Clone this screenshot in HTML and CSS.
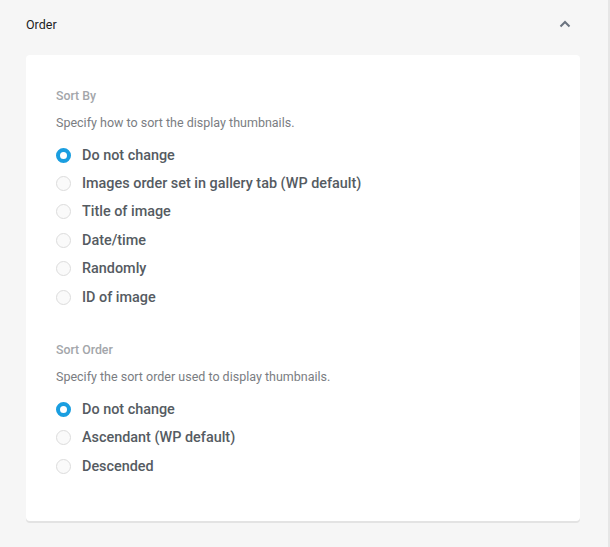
FILE: index.html
```html
<!DOCTYPE html>
<html lang="en">
<head>
<meta charset="utf-8">
<title>Order</title>
<link rel="stylesheet" href="styles.css">
</head>
<body>
<div class="page">
  <div class="panel-header">
    <span class="panel-title">Order</span>
    <svg class="chevron" width="12" height="8" viewBox="0 0 12 8"><path d="M1.5 6.5 L6 2 L10.5 6.5" fill="none" stroke="#6b7480" stroke-width="2"/></svg>
  </div>
  <div class="card">
    <div class="field">
      <div class="field-label">Sort By</div>
      <div class="field-desc">Specify how to sort the display thumbnails.</div>
      <div class="options">
        <div class="option"><span class="radio checked"></span><span class="option-text">Do not change</span></div>
        <div class="option"><span class="radio"></span><span class="option-text">Images order set in gallery tab (WP default)</span></div>
        <div class="option"><span class="radio"></span><span class="option-text">Title of image</span></div>
        <div class="option"><span class="radio"></span><span class="option-text">Date/time</span></div>
        <div class="option"><span class="radio"></span><span class="option-text">Randomly</span></div>
        <div class="option"><span class="radio"></span><span class="option-text">ID of image</span></div>
      </div>
    </div>
    <div class="field second">
      <div class="field-label">Sort Order</div>
      <div class="field-desc">Specify the sort order used to display thumbnails.</div>
      <div class="options">
        <div class="option"><span class="radio checked"></span><span class="option-text">Do not change</span></div>
        <div class="option"><span class="radio"></span><span class="option-text">Ascendant (WP default)</span></div>
        <div class="option"><span class="radio"></span><span class="option-text">Descended</span></div>
      </div>
    </div>
  </div>
</div>
</body>
</html>
```

FILE: styles.css
```css
html, body {
  margin: 0;
  padding: 0;
}
body {
  background: #f6f6f6;
  font-family: Roboto, "Liberation Sans", sans-serif;
  width: 610px;
  height: 547px;
  overflow: hidden;
}
.page {
  width: 608px;
  height: 547px;
  border-right: 2px solid #e6e6e6;
  box-sizing: content-box;
}
.panel-header {
  height: 48px;
  display: flex;
  align-items: center;
  justify-content: space-between;
  padding: 0 37px 0 26px;
}
.panel-title {
  font-size: 12.5px;
  color: #1e1e1e;
}
.chevron {
  display: block;
  margin-top: -1px;
}
.card {
  margin: 7px 28px 0 26px;
  background: #fff;
  border-radius: 4px;
  box-shadow: 0 2px 0 #e3e3e3;
  padding: 33px 30px 40px 30px;
}
.field.second {
  margin-top: 31px;
}
.field-label {
  font-size: 12.3px;
  line-height: 16px;
  font-weight: 500;
  color: #a3a6aa;
}
.field-desc {
  margin-top: 11px;
  font-size: 12.5px;
  line-height: 16px;
  color: #7a7d82;
}
.options {
  margin-top: 10px;
}
.option {
  display: flex;
  align-items: center;
  height: 28.4px;
}
.radio {
  width: 15px;
  height: 15px;
  box-sizing: border-box;
  border-radius: 50%;
  border: 1px solid #dcdcdc;
  background: #fafafa;
  margin-right: 11px;
  flex: none;
}
.radio.checked {
  border: 4.5px solid #1a9ee0;
  background: #fff;
}
.option-text {
  font-size: 14.4px;
  font-weight: 500;
  color: #555b62;
}
```
